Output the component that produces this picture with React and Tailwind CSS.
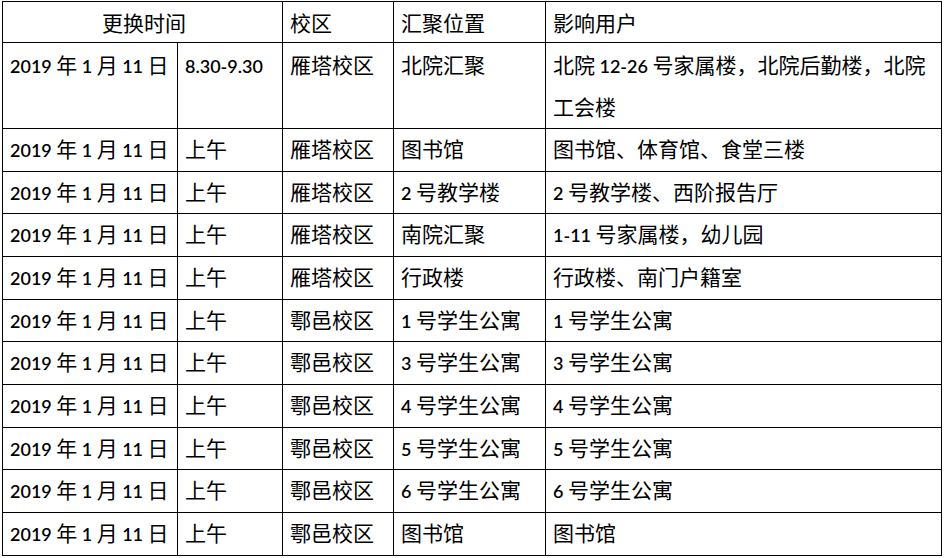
import React from "react";

const rows = [
  ["2019 年 1 月 11 日", "上午", "雁塔校区", "图书馆", "图书馆、体育馆、食堂三楼"],
  ["2019 年 1 月 11 日", "上午", "雁塔校区", "2 号教学楼", "2 号教学楼、西阶报告厅"],
  ["2019 年 1 月 11 日", "上午", "雁塔校区", "南院汇聚", "1-11 号家属楼，幼儿园"],
  ["2019 年 1 月 11 日", "上午", "雁塔校区", "行政楼", "行政楼、南门户籍室"],
  ["2019 年 1 月 11 日", "上午", "鄠邑校区", "1 号学生公寓", "1 号学生公寓"],
  ["2019 年 1 月 11 日", "上午", "鄠邑校区", "3 号学生公寓", "3 号学生公寓"],
  ["2019 年 1 月 11 日", "上午", "鄠邑校区", "4 号学生公寓", "4 号学生公寓"],
  ["2019 年 1 月 11 日", "上午", "鄠邑校区", "5 号学生公寓", "5 号学生公寓"],
  ["2019 年 1 月 11 日", "上午", "鄠邑校区", "6 号学生公寓", "6 号学生公寓"],
  ["2019 年 1 月 11 日", "上午", "鄠邑校区", "图书馆", "图书馆"],
];

// rows in the source are 42.7px; alternate whole pixels to land on the same lines
const rowHeights = [
  "h-[43px]", "h-[42px]", "h-[43px]", "h-[43px]", "h-[42px]",
  "h-[43px]", "h-[43px]", "h-[42px]", "h-[43px]", "h-[43px]",
];

// latin runs are set a bit smaller so Lato sits at Calibri's width
const Mixed = ({ text }) =>
  text.split(/([0-9.\- ]+)/).map((part, i) =>
    /[0-9]/.test(part) || part === " " ? (
      <span key={i} className="text-[18px] font-semibold leading-none">
        {part}
      </span>
    ) : (
      <React.Fragment key={i}>{part}</React.Fragment>
    )
  );

const cell =
  "border border-black pl-[7px] pr-[4px] py-0 align-top whitespace-nowrap overflow-hidden";

export default function App() {
  return (
    <div
      className="w-[945px] h-[558px] bg-white text-black pt-[1px] pl-[2px] text-[21px]"
      style={{ fontFamily: "Lato, 'Noto Sans CJK SC', sans-serif" }}
    >
      <table className="table-fixed border-collapse w-[939px]">
        <colgroup>
          <col className="w-[175px]" />
          <col className="w-[105px]" />
          <col className="w-[111px]" />
          <col className="w-[152px]" />
          <col className="w-[396px]" />
        </colgroup>
        <tbody className="leading-[38px]">
          <tr className="h-[41px]">
            <td colSpan={2} className={`${cell} text-center pt-[2px]`}>
              更换时间
            </td>
            <td className={`${cell} pt-[2px]`}>校区</td>
            <td className={`${cell} pt-[2px]`}>汇聚位置</td>
            <td className={`${cell} pt-[2px]`}>影响用户</td>
          </tr>
          <tr className="h-[85px] leading-[42px]">
            <td className={`${cell} pl-[6px] pt-[1px]`}>
              <Mixed text="2019 年 1 月 11 日" />
            </td>
            <td className={`${cell} pt-[1px]`}>
              <Mixed text="8.30-9.30" />
            </td>
            <td className={`${cell} pt-[1px]`}>雁塔校区</td>
            <td className={`${cell} pt-[1px]`}>北院汇聚</td>
            <td className={`${cell} pt-[1px]`}>
              <Mixed text="北院 12-26 号家属楼，北院后勤楼，北院" />
              <br />
              工会楼
            </td>
          </tr>
          {rows.map((r, i) => (
            <tr key={i} className={rowHeights[i]}>
              {r.map((c, j) => (
                <td key={j} className={`${cell} ${j === 0 ? "pl-[6px]" : ""} pt-[1px]`}>
                  <Mixed text={c} />
                </td>
              ))}
            </tr>
          ))}
        </tbody>
      </table>
    </div>
  );
}
